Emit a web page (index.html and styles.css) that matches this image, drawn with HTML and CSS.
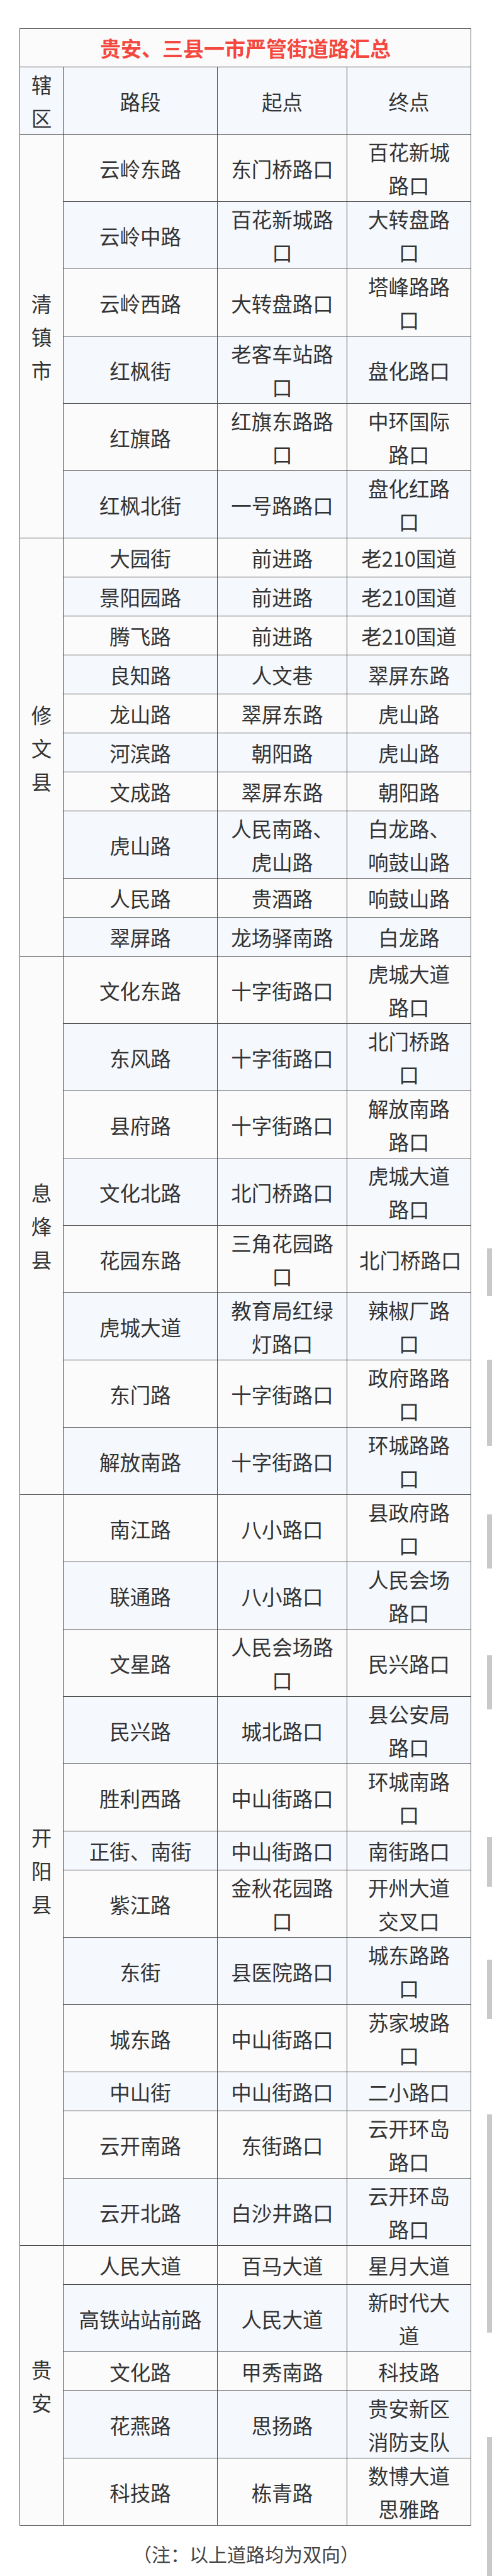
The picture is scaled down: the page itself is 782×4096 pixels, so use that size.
FILE: index.html
```html
<!DOCTYPE html>
<html lang="zh-CN">
<head>
<meta charset="utf-8">
<title>贵安、三县一市严管街道路汇总</title>
<link rel="stylesheet" href="styles.css">
</head>
<body>
<div class="page">
  <table class="roads">
    <colgroup>
      <col class="c-area"><col class="c-road"><col class="c-start"><col class="c-end">
    </colgroup>
    <tr class="title-row"><td colspan="4" class="title">贵安、三县一市严管街道路汇总</td></tr>
    <tr class="head"><td class="area">辖<br>区</td><td>路段</td><td>起点</td><td>终点</td></tr>

    <tr class="odd"><td class="area" rowspan="6">清<br>镇<br>市</td><td>云岭东路</td><td>东门桥路口</td><td>百花新城<br>路口</td></tr>
    <tr class="even"><td>云岭中路</td><td>百花新城路<br>口</td><td>大转盘路<br>口</td></tr>
    <tr class="odd"><td>云岭西路</td><td>大转盘路口</td><td>塔峰路路<br>口</td></tr>
    <tr class="even"><td>红枫街</td><td>老客车站路<br>口</td><td>盘化路口</td></tr>
    <tr class="odd"><td>红旗路</td><td>红旗东路路<br>口</td><td>中环国际<br>路口</td></tr>
    <tr class="even"><td>红枫北街</td><td>一号路路口</td><td>盘化红路<br>口</td></tr>

    <tr class="odd"><td class="area" rowspan="10">修<br>文<br>县</td><td>大园街</td><td>前进路</td><td>老210国道</td></tr>
    <tr class="even"><td>景阳园路</td><td>前进路</td><td>老210国道</td></tr>
    <tr class="odd"><td>腾飞路</td><td>前进路</td><td>老210国道</td></tr>
    <tr class="even"><td>良知路</td><td>人文巷</td><td>翠屏东路</td></tr>
    <tr class="odd"><td>龙山路</td><td>翠屏东路</td><td>虎山路</td></tr>
    <tr class="even"><td>河滨路</td><td>朝阳路</td><td>虎山路</td></tr>
    <tr class="odd"><td>文成路</td><td>翠屏东路</td><td>朝阳路</td></tr>
    <tr class="even"><td>虎山路</td><td>人民南路、<br>虎山路</td><td>白龙路、<br>响鼓山路</td></tr>
    <tr class="odd"><td>人民路</td><td>贵酒路</td><td>响鼓山路</td></tr>
    <tr class="even"><td>翠屏路</td><td>龙场驿南路</td><td>白龙路</td></tr>

    <tr class="odd"><td class="area" rowspan="8">息<br>烽<br>县</td><td>文化东路</td><td>十字街路口</td><td>虎城大道<br>路口</td></tr>
    <tr class="even"><td>东风路</td><td>十字街路口</td><td>北门桥路<br>口</td></tr>
    <tr class="odd"><td>县府路</td><td>十字街路口</td><td>解放南路<br>路口</td></tr>
    <tr class="even"><td>文化北路</td><td>北门桥路口</td><td>虎城大道<br>路口</td></tr>
    <tr class="odd"><td>花园东路</td><td>三角花园路<br>口</td><td>北门桥路口</td></tr>
    <tr class="even"><td>虎城大道</td><td>教育局红绿<br>灯路口</td><td>辣椒厂路<br>口</td></tr>
    <tr class="odd"><td>东门路</td><td>十字街路口</td><td>政府路路<br>口</td></tr>
    <tr class="even"><td>解放南路</td><td>十字街路口</td><td>环城路路<br>口</td></tr>

    <tr class="odd"><td class="area" rowspan="12">开<br>阳<br>县</td><td>南江路</td><td>八小路口</td><td>县政府路<br>口</td></tr>
    <tr class="even"><td>联通路</td><td>八小路口</td><td>人民会场<br>路口</td></tr>
    <tr class="odd"><td>文星路</td><td>人民会场路<br>口</td><td>民兴路口</td></tr>
    <tr class="even"><td>民兴路</td><td>城北路口</td><td>县公安局<br>路口</td></tr>
    <tr class="odd"><td>胜利西路</td><td>中山街路口</td><td>环城南路<br>口</td></tr>
    <tr class="even"><td>正街、南街</td><td>中山街路口</td><td>南街路口</td></tr>
    <tr class="odd"><td>紫江路</td><td>金秋花园路<br>口</td><td>开州大道<br>交叉口</td></tr>
    <tr class="even"><td>东街</td><td>县医院路口</td><td>城东路路<br>口</td></tr>
    <tr class="odd"><td>城东路</td><td>中山街路口</td><td>苏家坡路<br>口</td></tr>
    <tr class="even"><td>中山街</td><td>中山街路口</td><td>二小路口</td></tr>
    <tr class="odd"><td>云开南路</td><td>东街路口</td><td>云开环岛<br>路口</td></tr>
    <tr class="even"><td>云开北路</td><td>白沙井路口</td><td>云开环岛<br>路口</td></tr>

    <tr class="odd"><td class="area" rowspan="5">贵<br>安</td><td>人民大道</td><td>百马大道</td><td>星月大道</td></tr>
    <tr class="even"><td>高铁站站前路</td><td>人民大道</td><td>新时代大<br>道</td></tr>
    <tr class="odd"><td>文化路</td><td>甲秀南路</td><td>科技路</td></tr>
    <tr class="even"><td>花燕路</td><td>思扬路</td><td>贵安新区<br>消防支队</td></tr>
    <tr class="odd"><td>科技路</td><td>栋青路</td><td>数博大道<br>思雅路</td></tr>
  </table>
  <p class="note">（注：以上道路均为双向）</p>

  <div class="edge-bar b1"></div>
  <div class="edge-bar b2"></div>
  <div class="edge-bar b3"></div>
  <div class="edge-bar b4"></div>
  <div class="edge-bar b5"></div>
  <div class="edge-bar b6"></div>
  <div class="edge-bar b7"></div>
  <div class="edge-bar b8"></div>
</div>
</body>
</html>
```
FILE: styles.css
```css
html, body {
  margin: 0;
  padding: 0;
  background: #ffffff;
}
body {
  font-family: "Noto Sans CJK SC", "Noto Sans", sans-serif;
  color: #333333;
}
.page {
  position: relative;
  width: 782px;
  height: 4096px;
  overflow: hidden;
  padding-top: 45px;
  box-sizing: border-box;
}
.roads {
  margin-left: 31px;
  width: 717px;
  table-layout: fixed;
  border-collapse: collapse;
  font-size: 32.5px;
  line-height: 53px;
}
.c-area { width: 69px; }
.c-road { width: 245px; }
.c-start { width: 206px; }
.c-end { width: 197px; }
.roads td {
  border: 1px solid #4d4d4d;
  padding: 0 19px;
  text-align: center;
  vertical-align: middle;
  white-space: nowrap;
}
.roads td.area {
  padding: 0;
  background: #fbfbfb;
}
.roads tr { height: 62px; }
.roads tr.title-row { height: 61px; }
.roads td.title {
  color: #f4473d;
  font-weight: bold;
  font-size: 33px;
  background: #fbfbfb;
  line-height: 60px;
}
.roads tr.head td { background: #f5f8fd; }
.roads tr.odd td { background: #fbfbfb; }
.roads tr.even td { background: #f5f8fd; }
.roads tr.odd td.area, .roads tr.even td.area { background: #fbfbfb; }
.roads tr.head td.area { background: #f5f8fd; }
.note {
  margin: 0;
  padding-top: 18px;
  text-align: center;
  font-size: 30px;
  line-height: 53px;
  color: #444444;
}
.edge-bar {
  position: absolute;
  right: 0;
  width: 8px;
  background: #c9c9c9;
}
.b1 { top: 1985px; height: 76px; }
.b2 { top: 2162px; height: 137px; }
.b3 { top: 2408px; height: 86px; }
.b4 { top: 2632px; height: 86px; }
.b5 { top: 2921px; height: 79px; }
.b6 { top: 3116px; height: 94px; }
.b7 { top: 3362px; height: 347px; }
.b8 { top: 3875px; height: 221px; }
```
